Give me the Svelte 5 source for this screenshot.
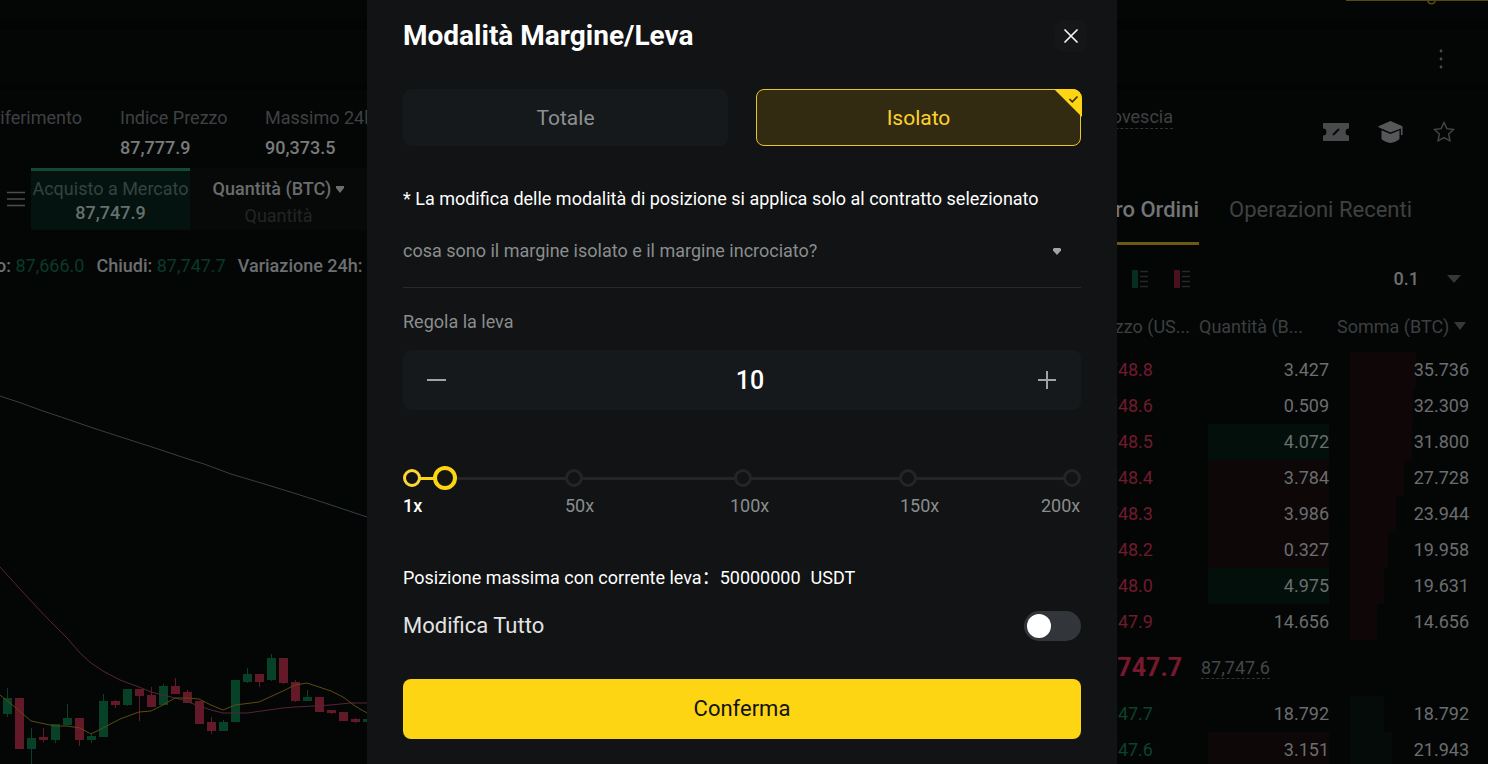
<script>
  let mode = $state('isolato');
  let leverage = $state(10);
  let editAll = $state(false);

  const stops = [
    { label: '1x', at: 0 },
    { label: '50x', at: 24.5 },
    { label: '100x', at: 50.2 },
    { label: '150x', at: 75.2 },
    { label: '200x', at: 100 }
  ];
  const progress = $derived(((leverage - 1) / 199) * 100);

  const asks = [
    { price: '87,748.8', qty: '3.427', sum: '35.736', depth: 66 },
    { price: '87,748.6', qty: '0.509', sum: '32.309', depth: 63 },
    { price: '87,748.5', qty: '4.072', sum: '31.800', depth: 62, flash: 'up' },
    { price: '87,748.4', qty: '3.784', sum: '27.728', depth: 54, flash: 'down' },
    { price: '87,748.3', qty: '3.986', sum: '23.944', depth: 46, flash: 'down' },
    { price: '87,748.2', qty: '0.327', sum: '19.958', depth: 38, flash: 'down' },
    { price: '87,748.0', qty: '4.975', sum: '19.631', depth: 34, flash: 'up' },
    { price: '87,747.9', qty: '14.656', sum: '14.656', depth: 27 }
  ];
  const bids = [
    { price: '87,747.7', qty: '18.792', sum: '18.792', depth: 34 },
    { price: '87,747.6', qty: '3.151', sum: '21.943', depth: 42, flash: 'down' }
  ];

  // x centre, body top, body bottom, wick top, wick bottom, rising
  const candles = [
    [7, 318, 334, 308, 337, 1], [19, 318, 369, 318, 369, 0], [31, 358, 369, 348, 384, 1],
    [43, 357, 360, 348, 362, 0], [55, 344, 360, 344, 363, 1], [67, 338, 345, 324, 345, 1],
    [79, 338, 360, 338, 366, 0], [91, 356, 360, 354, 363, 1], [103, 321, 357, 314, 357, 1],
    [115, 321, 325, 320, 328, 0], [127, 309, 325, 309, 326, 1], [139, 309, 316, 309, 341, 0],
    [151, 315, 327, 307, 327, 0], [163, 306, 325, 304, 325, 1], [175, 306, 314, 298, 314, 0],
    [187, 312, 323, 310, 323, 0], [199, 321, 344, 321, 344, 0], [211, 342, 351, 337, 354, 0],
    [223, 342, 351, 340, 351, 1], [235, 300, 342, 300, 342, 1], [247, 294, 302, 288, 303, 1],
    [259, 294, 302, 294, 307, 0], [271, 278, 300, 274, 301, 1], [283, 278, 303, 278, 304, 0],
    [295, 302, 321, 300, 322, 0], [307, 317, 321, 310, 321, 1], [319, 317, 332, 317, 332, 0],
    [331, 330, 333, 330, 334, 0], [343, 332, 341, 332, 341, 0], [355, 339, 342, 338, 343, 0],
    [367, 339, 342, 339, 342, 1]
  ];
</script>

{#snippet bookRow(row, side)}
  <tr>
    <td class="price {side}"><div class="clip">{row.price}</div></td>
    <td class="qty"><div class="cell {row.flash ?? ''}">{row.qty}</div></td>
    <td class="sum"><i class="depth {side}" style="width: {row.depth}px"></i><span>{row.sum}</span></td>
  </tr>
{/snippet}

<div class="page">
  <header class="topbar">
    <div class="promo">
      <svg width="12" height="5" viewBox="0 0 12 5" aria-hidden="true"><path d="M2 0c0 3.500 7 3.500 7 0" fill="none" stroke="currentColor" stroke-width="1.500" /></svg>
    </div>
  </header>
  <div class="toolbar">
    <button class="dots" aria-label="Altro">
      <svg width="4" height="20" viewBox="0 0 4 20"><g fill="currentColor"><circle cx="2" cy="2" r="1.4" /><circle cx="2" cy="10" r="1.4" /><circle cx="2" cy="18" r="1.4" /></g></svg>
    </button>
  </div>

  <main>
    <section class="market">
      <div class="stats">
        <div class="stat cut"><span>Prezzo di riferimento</span></div>
        <div class="stat"><span>Indice Prezzo</span><b>87,777.9</b></div>
        <div class="stat"><span>Massimo 24h</span><b>90,373.5</b></div>
      </div>
      <div class="order">
        <button class="burger" aria-label="Menu">
          <svg width="18" height="16" viewBox="0 0 18 16"><path d="M0 1.5h18M0 8h18M0 14.5h18" stroke="currentColor" stroke-width="1.3" /></svg>
        </button>
        <button class="buy"><span>Acquisto a Mercato</span><b>87,747.9</b></button>
        <div class="amount">
          <label for="amount">Quantità (BTC)
            <svg width="8" height="7" viewBox="0 0 8 7" aria-hidden="true"><path d="M0 0h8v2L4 7 0 2z" fill="currentColor" /></svg>
          </label>
          <input id="amount" placeholder="Quantità" />
        </div>
      </div>
      <div class="ohlc">
        <span class="first">o: <em>87,666.0</em></span>
        <span>Chiudi: <em>87,747.7</em></span>
        <span>Variazione 24h:</span>
      </div>
      <svg class="chart" viewBox="0 0 367 384" preserveAspectRatio="xMaxYMin slice" role="img" aria-label="Grafico">
        <path d="M0 16L21 23 43 31 64 38 93 48 130 60 152 67 167 72 188 79 204 84 231 94 271 106 300 115 328 124 346 130 367 137" stroke="#353e46" />
        {#each candles as [x, top, bottom, high, low, up]}
          <g fill={up ? '#064128' : '#631928'}>
            <rect x={x - 4} y={top} width="9" height={bottom - top} />
            <rect x={x} y={high} width="1" height={low - high} />
          </g>
        {/each}
        <path d="M0 187L31 221 51 242 67 258 80 273 91 283 103 291 120 300 139 307 151 312 163 315 183 320 199 326 211 330 223 333 247 333 283 328 295 327 331 325 350 323 367 323" stroke="#56243a" />
        <path d="M0 315L16 328 31 341 55 346 67 346 80 348 91 354 103 348 120 339 139 332 151 331 163 325 175 318 187 318 199 319 211 325 223 330 235 325 259 322 283 311 295 305 307 303 331 311 343 317 355 326 367 333" stroke="#5b4c10" />
      </svg>
    </section>

    <section class="book">
      <div class="quick">
        <div class="clip count"><span class="dotted">Conto alla rovescia</span></div>
        <div class="icons">
          <button aria-label="Coupon">
            <svg width="26" height="20" viewBox="0 0 26 20"><path d="M0 1h26v5.5a3.5 3.5 0 0 0 0 7V19H0v-5.500a3.500 3.500 0 0 0 0-7z" fill="#484a4b" /><path d="M10 13l6-6" stroke="#090b0b" stroke-width="2" /></svg>
          </button>
          <button aria-label="Guida">
            <svg width="26" height="24" viewBox="0 0 26 24"><path d="M12.500 1l12 5.200V15h-1.600V8.500l-10.400 4-12-5.200V6.200z" fill="#555758" /><path d="M3.500 10.200l9 3.800 9-3.800v8.600c-1 1.700-6 4.200-9 4.200s-8-2.500-9-4.200z" fill="#555758" /></svg>
          </button>
          <button aria-label="Preferiti">
            <svg width="22" height="22" viewBox="0 0 22 22"><path d="M11 1.500l2.900 6.100 6.600.9-4.800 4.600 1.200 6.700-5.900-3.200-5.900 3.200 1.200-6.700L1.500 8.500l6.600-.9z" fill="none" stroke="#45494b" stroke-width="1.400" /></svg>
          </button>
        </div>
      </div>

      <nav class="tabs">
        <a class="on" href="#libro"><span>Libro Ordini</span></a>
        <a href="#recenti">Operazioni Recenti</a>
      </nav>

      <div class="filters">
        <div class="views">
          <button aria-label="Solo acquisti">
            <svg width="18" height="18" viewBox="0 0 18 18"><path d="M0 0h6v18H0z" fill="#062e1f" /><path d="M8 1.500h8M8 6.500h8M8 11.500h8M8 16.500h8" stroke="#26292a" stroke-width="1.500" /></svg>
          </button>
          <button aria-label="Solo vendite">
            <svg width="18" height="18" viewBox="0 0 18 18"><path d="M0 0h6v18H0z" fill="#4a101d" /><path d="M8 1.500h8M8 6.500h8M8 11.500h8M8 16.500h8" stroke="#26292a" stroke-width="1.500" /></svg>
          </button>
        </div>
        <button class="step">0.1
          <svg width="14" height="8" viewBox="0 0 14 8"><path d="M0 0h14L7 8z" fill="#353838" /></svg>
        </button>
      </div>

      <table>
        <colgroup><col class="c1" /><col class="c2" /><col class="c3" /></colgroup>
        <thead>
          <tr>
            <th class="h1"><div class="clip">Prezzo (US...</div></th>
            <th>Quantità (B...</th>
            <th>Somma (BTC) <svg width="12" height="8" viewBox="0 0 12 8" aria-hidden="true"><path d="M0 0h12L6 8z" fill="#353838" /></svg></th>
          </tr>
        </thead>
        <tbody>
          {#each asks as row}{@render bookRow(row, 'ask')}{/each}
          <tr class="last">
            <td><div class="clip">87,747.7</div></td>
            <td colspan="2"><span class="dotted">87,747.6</span></td>
          </tr>
          {#each bids as row}{@render bookRow(row, 'bid')}{/each}
        </tbody>
      </table>
    </section>
  </main>
</div>

<div class="overlay">
  <div class="dialog" role="dialog" aria-modal="true" aria-labelledby="title">
    <div class="head">
      <h1 id="title">Modalità Margine/Leva</h1>
      <button class="close" aria-label="Chiudi">
        <svg width="14" height="14" viewBox="0 0 14 14"><path d="M1 1l12 12M13 1L1 13" stroke="#f4f4f4" stroke-width="1.700" stroke-linecap="round" /></svg>
      </button>
    </div>

    <div class="modes">
      {#each [['totale', 'Totale'], ['isolato', 'Isolato']] as [id, name]}
        <button class:selected={mode === id} aria-pressed={mode === id} onclick={() => (mode = id)}>
          {name}
          {#if mode === id}
            <svg class="tick" width="28" height="28" viewBox="0 0 28 28"><path d="M0 0h19a9 9 0 0 1 9 9v19z" fill="#fdd512" /><path d="M15.500 10l2.800 2.800 5.200-5.300" fill="none" stroke="#302a10" stroke-width="1.600" /></svg>
          {/if}
        </button>
      {/each}
    </div>

    <p class="note">* La modifica delle modalità di posizione si applica solo al contratto selezionato</p>
    <button class="question">
      cosa sono il margine isolato e il margine incrociato?
      <svg width="8" height="7" viewBox="0 0 8 7"><path d="M1 0h6l1 1v1.500L4 7 0 2.500V1z" fill="#a3a5a5" /></svg>
    </button>

    <label class="caption" for="leverage">Regola la leva</label>
    <div class="stepper">
      <button aria-label="Riduci" onclick={() => (leverage = Math.max(1, leverage - 1))}>
        <svg width="20" height="20" viewBox="0 0 20 20"><path d="M0 10h19" stroke="#a0a3a4" stroke-width="2" /></svg>
      </button>
      <input id="leverage" type="text" inputmode="numeric" bind:value={leverage} />
      <button aria-label="Aumenta" onclick={() => (leverage = Math.min(200, +leverage + 1))}>
        <svg width="20" height="20" viewBox="0 0 20 20"><path d="M1 10h18M10 1v18" stroke="#a0a3a4" stroke-width="2" /></svg>
      </button>
    </div>

    <div class="slider">
      <div class="rail">
        <div class="fill" style="width: {progress}%"></div>
        {#each stops as stop, i}
          <i class="stop" class:done={i === 0} style="left: {stop.at}%"></i>
        {/each}
      </div>
      <input type="range" min="1" max="200" bind:value={leverage} aria-label="Leva" />
    </div>
    <div class="marks">
      {#each stops as stop, i}<span class:done={i === 0}>{stop.label}</span>{/each}
    </div>

    <p class="max">Posizione massima con corrente leva：<span>50000000</span><span>USDT</span></p>

    <label class="toggle">
      Modifica Tutto
      <input type="checkbox" role="switch" bind:checked={editAll} />
    </label>

    <button class="confirm">Conferma</button>
  </div>
</div>

<style>
  :global(body) { margin: 0; background: #040606; overflow: hidden; }
  :global(#app) { font-family: Roboto, "Noto Sans CJK SC", sans-serif; font-size: 18px; line-height: 24px; }
  button, input { font: inherit; color: inherit; border: 0; padding: 0; background: none; margin: 0; }
  button { cursor: pointer; }
  svg { display: block; flex: none; }
  h1, p { margin: 0; }
  b { font-weight: 500; }
  em { font-style: normal; font-weight: 400; color: #083a27; }

  .page { height: 100vh; display: flex; flex-direction: column; overflow: hidden; color: #6d6f70; white-space: nowrap; }
  .topbar { height: 20px; border-bottom: 10px solid #020303; display: flex; justify-content: flex-end; }
  .promo { width: 142px; height: 0; border-top: 1px solid #544a14; color: #544a14; }
  .promo svg { margin-left: 80px; }
  .toolbar { height: 54px; border-bottom: 6px solid #020303; display: flex; justify-content: flex-end; align-items: center; padding-right: 45px; }
  .dots { color: #4a4c4d; padding-top: 4px; }
  main { flex: 1; min-height: 0; display: flex; justify-content: space-between; }

  .market { width: calc(50% - 377px); display: flex; flex-direction: column; overflow: hidden; }
  .stats { height: 65px; padding-top: 13px; display: flex; line-height: 30px; }
  .stat { display: flex; flex-direction: column; flex: none; width: 145px; color: #3f4142; }
  .stat b { color: #797b7c; }
  .stat.cut { width: 82px; margin-right: 38px; align-items: flex-end; }
  .order { height: 62px; display: flex; align-items: stretch; }
  .burger { width: 31px; padding-left: 7px; color: #4b4d4e; }
  .buy { width: 159px; display: flex; flex-direction: column; align-items: center; padding-top: 6px; border-top: 3px solid #144a34; background: #04130f; color: #33443e; }
  .buy b { color: #65716d; }
  .amount { width: 177px; background: #070909; padding-top: 9px; display: flex; flex-direction: column; align-items: center; gap: 3px; }
  .amount label { display: flex; align-items: center; gap: 5px; color: #6a6c6d; font-weight: 500; }
  .amount input { width: 120px; text-align: center; }
  .amount input::placeholder { color: #222526; opacity: 1; }
  .ohlc { display: flex; gap: 12px; padding: 24px 0 0; font-weight: 500; }
  .first { margin-left: -4px; }
  .chart { flex: 1; min-height: 0; width: 100%; margin-top: 102px; }
  .chart path { fill: none; }

  .book { width: calc(50% - 373px); overflow: hidden; }
  .clip { display: flex; justify-content: flex-end; overflow: hidden; }
  .dotted { border-bottom: 1px dashed #303334; line-height: 22px; }
  .quick { height: 104px; padding: 16px 33px 0 0; box-sizing: border-box; display: flex; justify-content: space-between; align-items: flex-start; }
  .count { width: 56px; color: #3f4142; }
  .icons { display: flex; gap: 29px; align-items: center; padding-top: 14px; height: 24px; }
  .tabs { display: flex; gap: 30px; font-size: 22px; }
  .tabs a { color: #3f4142; text-decoration: none; line-height: 32px; }
  .tabs .on { width: 82px; display: flex; justify-content: flex-end; overflow: hidden; color: #737475; font-weight: 500; padding-bottom: 16px; border-bottom: 3px solid #6b5a12; }
  .filters { display: flex; justify-content: space-between; align-items: center; height: 24px; padding: 22px 27px 0 15px; }
  .views { display: flex; gap: 24px; }
  .step { display: flex; align-items: center; gap: 28px; font-weight: 500; }

  table { width: 100%; margin-top: 24px; border-collapse: collapse; table-layout: fixed; }
  .c1 { width: 82px; }
  .c2 { width: 138px; }
  th { padding: 0; height: 37px; vertical-align: top; text-align: left; font-weight: 400; color: #3c3f40; }
  th svg { display: inline-block; vertical-align: 3px; }
  .h1 { padding-right: 9px; }
  td { padding: 0; height: 36px; text-align: right; color: #6b6d6e; }
  td.price { padding-right: 46px; }
  td.price.ask { color: #701a2d; }
  td.price.bid { color: #0a432b; }
  td.qty { padding: 0 8px 0 9px; }
  .cell { line-height: 36px; }
  .cell.up { background: #030f0b; }
  .cell.down { background: #0d0708; }
  td.sum { padding-right: 19px; position: relative; }
  td.sum span { position: relative; }
  .depth { position: absolute; left: 13px; top: 0; bottom: 0; }
  .depth.ask { background: #0f0607; }
  .depth.bid { background: #040b09; }
  .last td { height: 56px; text-align: left; color: #434647; padding-left: 2px; }
  .last td:first-child { font-size: 25px; font-weight: 700; color: #77192c; padding: 0 17px 0 0; }

  .overlay { position: fixed; inset: 0; display: flex; justify-content: center; padding-right: 4px; }
  .dialog { width: 750px; max-width: 100%; box-sizing: border-box; padding: 16px 36px 25px; background: #111314; color: #fff; display: flex; flex-direction: column; overflow: auto; }
  .head { height: 40px; display: flex; align-items: center; justify-content: space-between; }
  h1 { font-size: 28px; line-height: 40px; font-weight: 700; }
  .close { width: 32px; height: 32px; margin-right: -6px; border-radius: 8px; background: #141618; display: grid; place-items: center; }
  .modes { margin-top: 33px; display: grid; grid-template-columns: 1fr 1fr; gap: 28px; }
  .modes button { position: relative; height: 57px; box-sizing: border-box; border-radius: 8px; background: #15191b; color: #8d9091; font-size: 21px; }
  .modes .selected { background: #322b12; border: 1px solid #e6c52d; color: #fdd12f; }
  .tick { position: absolute; top: -1px; right: -2px; }
  .note { margin-top: 41px; }
  .question { margin-top: 26px; padding: 0 20px 22px 0; line-height: 28px; display: flex; align-items: center; justify-content: space-between; color: #8a8d8e; border-bottom: 1px solid #27292a; }
  .caption { margin-top: 22px; color: #8a8d8e; }
  .stepper { margin-top: 16px; height: 60px; display: flex; align-items: center; border-radius: 8px; background: #15191b; }
  .stepper button { padding: 20px 24px; }
  .stepper input { flex: 1; min-width: 0; text-align: center; font-size: 25px; font-weight: 500; padding-left: 16px; }
  .slider { margin-top: 56px; display: grid; align-items: center; height: 24px; }
  .slider > * { grid-area: 1 / 1; }
  .rail { position: relative; margin: 0 9px; height: 3px; background: #232526; }
  .fill { height: 100%; background: #fdd512; }
  .stop { position: absolute; top: 50%; width: 18px; height: 18px; margin: -9px 0 0 -9px; box-sizing: border-box; border: 3px solid #232526; border-radius: 50%; background: #111314; }
  .stop.done { border-color: #fdd835; }
  input[type='range'] { position: relative; appearance: none; width: 100%; height: 24px; }
  input[type='range']::-webkit-slider-thumb { appearance: none; width: 24px; height: 24px; box-sizing: border-box; border: 4px solid #fdd512; border-radius: 50%; background: #151512; }
  .marks { margin-top: 4px; display: grid; grid-template-columns: 162fr 165fr 170fr 141fr 40fr; color: #8a8d8e; }
  .marks .done { color: #fff; font-weight: 500; }
  .max { margin-top: 48px; display: flex; }
  .max span + span { margin-left: 10px; }
  .toggle { margin-top: 21px; height: 30px; display: flex; justify-content: space-between; align-items: center; font-size: 22px; color: #e2e3e3; }
  .toggle input { appearance: none; width: 57px; height: 30px; border-radius: 15px; background: #323539; padding: 3px; box-sizing: border-box; }
  .toggle input::before { content: ''; display: block; width: 24px; height: 24px; border-radius: 50%; background: #fff; }
  .toggle input:checked { background: #fdd512; }
  .toggle input:checked::before { margin-left: 27px; }
  .confirm { margin-top: 38px; height: 60px; flex: none; border-radius: 8px; background: #fdd512; color: #111314; font-size: 22px; }
</style>
